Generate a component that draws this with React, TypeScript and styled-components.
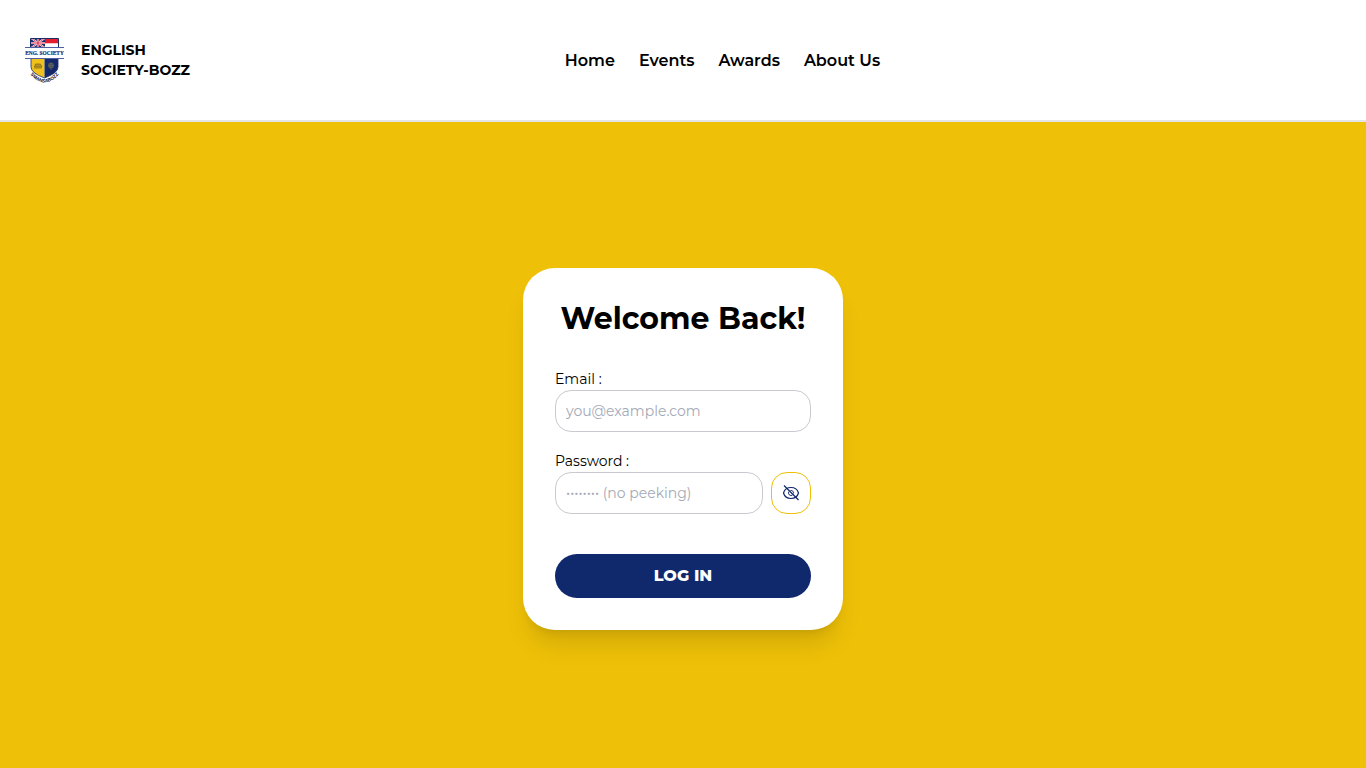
import React, { useState } from 'react';
import styled, { createGlobalStyle } from 'styled-components';

const GlobalStyle = createGlobalStyle`
  *, *::before, *::after { box-sizing: border-box; }
  body {
    margin: 0;
    color: #000;
    font-family: Montserrat, Inter, sans-serif;
    font-size: 14px;
    line-height: 20px;
  }
  button, input { font: inherit; }
`;

const Page = styled.div`
  min-height: 100vh;
  display: flex;
  flex-direction: column;
  background: #eec008;
`;

const Header = styled.header`
  display: flex;
  align-items: center;
  justify-content: space-between;
  min-height: 122px;
  padding: 0 24px;
  background: #fff;
  border-bottom: 2px solid #e2e4ea;
`;

const Brand = styled.a`
  display: flex;
  align-items: center;
  gap: 16px;
  color: #000;
  font-weight: 700;
  text-decoration: none;
`;

const BrandLine = styled.span`
  display: block;
`;

const Nav = styled.nav`
  display: flex;
  gap: 24px;
`;

const NavLink = styled.a`
  color: #000;
  font-size: 16px;
  line-height: 25px;
  font-weight: 600;
  text-decoration: none;
`;

const HeaderEnd = styled.div`
  width: 87px;
`;

const Main = styled.main`
  flex: 1;
  display: flex;
  align-items: center;
  justify-content: center;
  padding: 8px 16px 0;
`;

const Card = styled.form`
  width: 100%;
  max-width: 320px;
  padding: 32px;
  border-radius: 32px;
  background: #fff;
  box-shadow: 0 20px 25px -5px rgba(0, 0, 0, 0.1), 0 8px 10px -6px rgba(0, 0, 0, 0.1);
`;

const Title = styled.h1`
  margin: 0 0 30px;
  font-size: 30px;
  line-height: 38px;
  font-weight: 700;
  text-align: center;
`;

const Field = styled.div`
  margin-bottom: 18px;
`;

const Label = styled.label`
  display: block;
  line-height: 22px;
`;

const Row = styled.div`
  display: flex;
  gap: 8px;
`;

const Input = styled.input`
  flex: 1;
  min-width: 0;
  height: 42px;
  padding: 0 10px;
  border: 1px solid #c9cacf;
  border-radius: 16px;
  background: #fff;
  outline: none;
  &::placeholder { color: #a3a9b5; opacity: 1; }
`;

const PeekButton = styled.button`
  display: flex;
  align-items: center;
  justify-content: center;
  width: 40px;
  height: 42px;
  padding: 0;
  border: 1px solid #eec008;
  border-radius: 16px;
  background: #fff;
  color: #10286c;
  cursor: pointer;
`;

const Submit = styled.button`
  display: block;
  width: 100%;
  height: 44px;
  margin-top: 40px;
  padding: 0;
  border: 0;
  border-radius: 22px;
  background: #10286c;
  color: #fff;
  font-size: 16px;
  line-height: 24px;
  font-weight: 800;
  cursor: pointer;
`;

const Crest = () => (
  <svg width="41" height="48" viewBox="0 0 41 48" aria-hidden="true">
    <defs>
      <path id="motto" d="M6 38 Q20.500 55 35 38" />
    </defs>
    <rect x="7" y="2" width="14" height="10" fill="#1c2d78" />
    <path d="M7 2 21 12M21 2 7 12" stroke="#fff" strokeWidth="1.600" />
    <path d="M7 2 21 12M21 2 7 12" stroke="#d3213d" strokeWidth=".7" />
    <path d="M14 2V12M7 7H21" stroke="#fff" strokeWidth="2.200" />
    <path d="M14 2V12M7 7H21" stroke="#d3213d" strokeWidth="1.200" />
    <rect x="21" y="3" width="13" height="4.500" fill="#e31d2d" />
    <rect x="21" y="7.500" width="13" height="4" fill="#fff" />
    <path d="M6.500 11V2.500H34.500V11" fill="none" stroke="#1c2d66" strokeWidth="1" />
    <path d="M1 11.500H40M1 22.500H40" stroke="#4a62a4" strokeWidth="1" />
    <text x="20.500" y="18.500" textAnchor="middle" fontFamily="Liberation Serif, serif" fontWeight="700" fontSize="5.400" fill="#14296b" stroke="#14296b" strokeWidth=".15">ENG. SOCIETY</text>
    <path d="M7 23H20.500V42Q7 37 7 31Z" fill="#efc11a" />
    <path d="M20.500 23H34V31Q34 37 20.500 42Z" fill="#14296b" />
    <path d="M7 23V31Q7 37 20.500 42Q34 37 34 31V23" fill="none" stroke="#14296b" strokeWidth=".8" />
    <path d="M10.500 31 11.500 28H16.500L18 31Z M10 32H18" fill="#b8941c" stroke="#796622" strokeWidth=".7" />
    <circle cx="27" cy="29.500" r="2.500" fill="#34466b" stroke="#77713f" strokeWidth=".7" />
    <path d="M27 27V34M25 29.500H29" stroke="#77713f" strokeWidth=".6" />
    <text fontFamily="Liberation Sans, sans-serif" fontWeight="700" fontSize="4.800" fill="#0c1230">
      <textPath href="#motto" startOffset="50%" textAnchor="middle">SMANSABOZZ</textPath>
    </text>
  </svg>
);

const EyeIcon = ({ slashed }: { slashed: boolean }) => (
  <svg width="18" height="18" viewBox="0 0 18 18" fill="none" stroke="currentColor" strokeWidth="1.200" aria-hidden="true">
    <path d="M1.500 9C2.500 5.500 5.500 3.500 9 3.500S15.500 5.500 16.500 9C15.500 12.500 12.500 14.500 9 14.500S2.500 12.500 1.500 9Z" />
    {slashed ? <path d="M7 7.500A2.500 2.500 0 0 0 10.500 11M8.500 6.500A2.500 2.500 0 0 1 11.500 9.500" strokeWidth="1" /> : <circle cx="9" cy="9" r="2.500" />}
    {slashed && <path d="M2 1.500 16.500 16" />}
  </svg>
);

export default function App() {
  const [visible, setVisible] = useState(false);
  return (
    <Page>
      <GlobalStyle />
      <Header>
        <Brand href="#home">
          <Crest />
          <span>
            <BrandLine>ENGLISH</BrandLine>
            <BrandLine>SOCIETY-BOZZ</BrandLine>
          </span>
        </Brand>
        <Nav>
          <NavLink href="#home">Home</NavLink>
          <NavLink href="#events">Events</NavLink>
          <NavLink href="#awards">Awards</NavLink>
          <NavLink href="#about">About Us</NavLink>
        </Nav>
        <HeaderEnd />
      </Header>
      <Main>
        <Card onSubmit={(e) => e.preventDefault()}>
          <Title>Welcome Back!</Title>
          <Field>
            <Label htmlFor="email">Email :</Label>
            <Row>
              <Input id="email" type="email" placeholder="you@example.com" />
            </Row>
          </Field>
          <Field>
            <Label htmlFor="password">Password :</Label>
            <Row>
              <Input id="password" type={visible ? 'text' : 'password'} placeholder="•••••••• (no peeking)" />
              <PeekButton type="button" aria-label="Toggle password visibility" onClick={() => setVisible(!visible)}>
                <EyeIcon slashed={!visible} />
              </PeekButton>
            </Row>
          </Field>
          <Submit type="submit">LOG IN</Submit>
        </Card>
      </Main>
    </Page>
  );
}
